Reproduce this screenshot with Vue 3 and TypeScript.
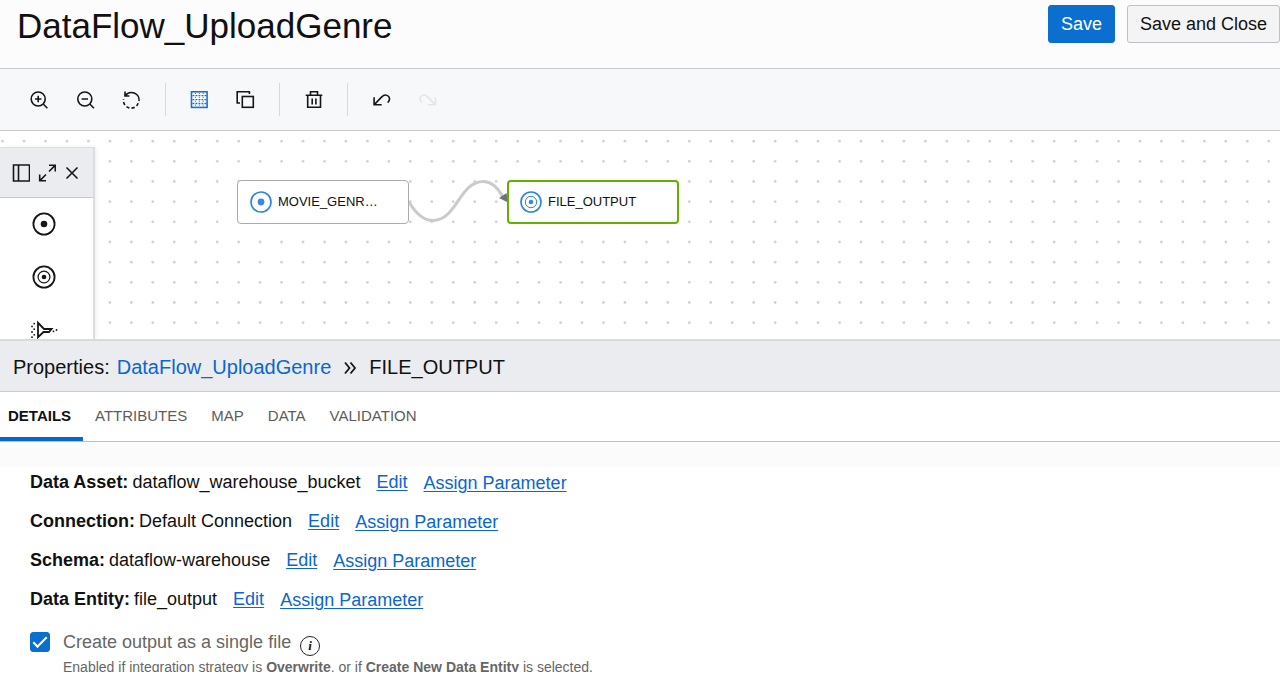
<script setup lang="ts">
import { ref } from 'vue'

interface DetailRow {
  label: string
  value: string
}

const flowName = 'DataFlow_UploadGenre'
const tabs: string[] = ['Details', 'Attributes', 'Map', 'Data', 'Validation']
const activeTab = ref('Details')
const singleFile = ref(true)

const rows: DetailRow[] = [
  { label: 'Data Asset:', value: 'dataflow_warehouse_bucket' },
  { label: 'Connection:', value: 'Default Connection' },
  { label: 'Schema:', value: 'dataflow-warehouse' },
  { label: 'Data Entity:', value: 'file_output' },
]

// Canvas grid: spacing of the dots and place of the first one
const grid = { dx: 21.46, dy: 20.16, x: 2.6, y: 10.2, cols: 120, rows: 10 }
const dots = Array.from({ length: grid.cols * grid.rows }, (_, i) => ({
  x: grid.x + (i % grid.cols) * grid.dx,
  y: grid.y + Math.floor(i / grid.cols) * grid.dy,
}))
</script>

<template>
  <div class="app">
    <header class="header">
      <h1>{{ flowName }}</h1>
      <div class="actions">
        <button class="btn primary" type="button">Save</button>
        <button class="btn" type="button">Save and Close</button>
      </div>
    </header>

    <div class="toolbar" role="toolbar" aria-label="Canvas tools">
      <button type="button" aria-label="Zoom in">
        <svg viewBox="0 0 24 24"><circle cx="11.2" cy="11" r="7" /><path d="M16.2 16l4.200 4.200M11.200 7.800v6.400M8 11h6.400" /></svg>
      </button>
      <button type="button" aria-label="Zoom out">
        <svg viewBox="0 0 24 24"><circle cx="11.8" cy="11" r="7" /><path d="M16.800 16l4.200 4.200M8.600 11h6.400" /></svg>
      </button>
      <button type="button" aria-label="Reset zoom">
        <svg viewBox="0 0 24 24">
          <path d="M6 3.600v4.400h4.400M6.200 7.800A7.600 7.600 0 0 1 20 13.200" />
          <path d="M19.200 15.200A7.600 7.600 0 0 1 4.600 11.200" stroke-dasharray="3.200 2.200" />
        </svg>
      </button>
      <span class="divider"></span>
      <button type="button" class="grid-on" aria-label="Toggle grid">
        <svg viewBox="0 0 24 24">
          <rect x="4.500" y="3.800" width="15.600" height="15.600" fill="#fff" />
          <path d="M5.500 7.700h14M5.500 11.600h14M5.500 15.500h14" stroke-dasharray="1.900 1.100" stroke-width="1.300" />
          <path d="M8.400 5v14M12.300 5v14M16.200 5v14" stroke-dasharray="1 2.900" stroke-width="1" />
        </svg>
      </button>
      <button type="button" aria-label="Duplicate">
        <svg viewBox="0 0 24 24"><path d="M7 15H4.200V3.700h12.200v2.400" /><rect x="9.300" y="8.500" width="11" height="10.800" /></svg>
      </button>
      <span class="divider"></span>
      <button type="button" aria-label="Delete">
        <svg viewBox="0 0 24 24"><path d="M4.700 7.200h16.600M9.500 7V3.700h7v3.300M6.700 7.500v11.800h12.800V7.500M11.200 10.500v6M14.900 10.500v6" /></svg>
      </button>
      <span class="divider"></span>
      <button type="button" aria-label="Undo">
        <svg viewBox="0 0 24 24"><path d="M5.100 9.300v7.500h7.600M5.300 16.600L12.500 9.100c5-5 11.200 1 6.200 5.500" /></svg>
      </button>
      <button type="button" disabled aria-label="Redo">
        <svg viewBox="0 0 24 24"><path d="M20.400 9.300v7.500h-7.600M20.200 16.600L13 9.100c-5-5-11.200 1-6.200 5.500" /></svg>
      </button>
    </div>

    <main class="canvas">
      <svg class="layer" aria-hidden="true">
        <circle v-for="(d, i) in dots" :key="i" :cx="d.x" :cy="d.y" r="1.4" fill="#d3d3d3" />
        <path d="M409 71C416 83 424 89.5 433 89.5C457 89.5 459 50.5 483.5 50.5C491 50.5 498 57 503 66" fill="none" stroke="#cbcbcb" stroke-width="3" />
        <path d="M499 67l7.500-5 1.500 9.500z" fill="#737373" />
      </svg>

      <div class="node source">
        <svg viewBox="0 0 22 22"><circle cx="11" cy="11" r="10" /><circle class="dot" cx="11" cy="11" r="3.4" /></svg>
        <span>MOVIE_GENR…</span>
      </div>
      <div class="node target">
        <svg viewBox="0 0 22 22">
          <circle cx="11" cy="11" r="10" /><circle class="thin" cx="11" cy="11" r="5.700" /><circle class="dot" cx="11" cy="11" r="2.300" />
        </svg>
        <span>FILE_OUTPUT</span>
      </div>

      <aside class="palette" aria-label="Operators">
        <div class="palette-head">
          <button type="button" aria-label="Dock panel">
            <svg viewBox="0 0 18 18"><path d="M1.500 1h16v16h-16zM6.500 1v16" /></svg>
          </button>
          <button type="button" aria-label="Expand panel">
            <svg viewBox="0 0 18 18"><path d="M11 1.200h6.300v6.300M17.100 1.400L11 7.500M8 16.800H1.700v-6.300M1.900 16.600l6.100-6.100" /></svg>
          </button>
          <button type="button" aria-label="Close panel">
            <svg viewBox="0 0 18 18"><path d="M2.500 3.500l11 11M13.500 3.500l-11 11" /></svg>
          </button>
        </div>
        <ul class="ops">
          <li>
            <svg viewBox="0 0 28 24"><circle cx="14" cy="12" r="10.600" /><circle class="fill" cx="14" cy="12" r="3.300" /></svg>
          </li>
          <li>
            <svg viewBox="0 0 28 24">
              <circle cx="14" cy="12" r="10.600" /><circle class="thin" cx="14" cy="12" r="5.900" /><circle class="fill" cx="14" cy="12" r="2.300" />
            </svg>
          </li>
          <li>
            <svg viewBox="0 0 28 24">
              <path d="M8 4.800v14.400L13.500 14h5.500l2.500-3H14z" />
              <g class="fill">
                <circle cx="4.200" cy="5.600" r=".9" /><circle cx="2" cy="8.400" r=".9" /><circle cx="4.200" cy="11.200" r=".9" />
                <circle cx="2" cy="14" r=".9" /><circle cx="4.200" cy="16.800" r=".9" /><circle cx="2" cy="19.200" r=".9" />
                <circle cx="23.500" cy="13.300" r=".9" /><circle cx="26.500" cy="12" r=".9" />
              </g>
            </svg>
          </li>
        </ul>
      </aside>
    </main>

    <section class="properties">
      <nav class="crumbs" aria-label="Properties">
        <span>Properties:</span>
        <a href="#flow">{{ flowName }}</a>
        <svg viewBox="0 0 14 14" aria-hidden="true"><path d="M2 1.500L6.500 7L2 12.500M7.500 1.500L12 7l-4.500 5.500" /></svg>
        <span>FILE_OUTPUT</span>
      </nav>

      <div class="tabs" role="tablist">
        <button
          v-for="tab in tabs"
          :key="tab"
          type="button"
          role="tab"
          :aria-selected="activeTab === tab"
          :class="{ active: activeTab === tab }"
          @click="activeTab = tab"
        >{{ tab }}</button>
      </div>

      <div class="details">
        <dl>
          <div v-for="row in rows" :key="row.label" class="row">
            <dt>{{ row.label }}</dt>
            <dd>{{ row.value }}</dd>
            <dd><a href="#edit">Edit</a></dd>
            <dd class="assign"><a href="#assign">Assign Parameter</a></dd>
          </div>
        </dl>
        <div class="check">
          <input id="single-file" v-model="singleFile" type="checkbox" />
          <label for="single-file">Create output as a single file</label>
          <button class="info" type="button" aria-label="More information">i</button>
        </div>
        <p class="help">
          Enabled if integration strategy is <b>Overwrite</b>, or if <b>Create New Data Entity</b> is selected.
        </p>
      </div>
    </section>
  </div>
</template>

<style>
body {
  margin: 0;
  background: #fff;
}
</style>

<style scoped>
.app {
  box-sizing: border-box;
  display: flex;
  flex-direction: column;
  height: 100vh;
  padding-bottom: 5px;
  overflow: hidden;
  color: #111;
  font-family: "Liberation Sans", Arial, sans-serif;
  font-size: 18px;
}

button {
  padding: 0;
  border: 0;
  background: none;
  color: inherit;
  font: inherit;
}

svg {
  fill: none;
  stroke: #161616;
  stroke-width: 1.6;
}

a {
  color: #0a66d2;
}

.header {
  display: flex;
  justify-content: space-between;
  flex: none;
  height: 68px;
  padding-left: 17px;
  border-bottom: 1px solid #c9c9cb;
  background: #fcfcfc;
}

h1 {
  margin: 0;
  font-size: 35px;
  font-weight: 400;
  line-height: 52px;
}

.actions {
  display: flex;
  align-items: flex-start;
  gap: 12px;
  padding-top: 5px;
}

.btn {
  height: 38px;
  padding: 0 12px;
  border: 1px solid #bcc1c8;
  border-radius: 3px;
  background: #f4f4f4;
}

.btn.primary {
  border-color: #0b6fd0;
  background: #0b6fd0;
  color: #fff;
}

.toolbar {
  display: flex;
  align-items: center;
  gap: 22px;
  flex: none;
  height: 61px;
  padding: 0 27px;
  border-bottom: 1px solid #c9c9cb;
  background: #f7f8fa;
}

.toolbar button,
.toolbar svg {
  display: block;
  width: 24px;
  height: 24px;
}

.toolbar .grid-on svg {
  stroke: #1470d6;
}

.toolbar button:disabled svg {
  stroke: #e4e5e7;
}

.divider {
  width: 1px;
  height: 33px;
  margin: 0 -1px 0 0;
  background: #d3d9e0;
}

.canvas {
  position: relative;
  flex: none;
  height: 208px;
  overflow: hidden;
  background: #fff;
}

.layer {
  position: absolute;
  inset: 0;
  width: 100%;
  height: 100%;
  stroke: none;
}

.node {
  position: absolute;
  top: 49px;
  box-sizing: border-box;
  display: flex;
  align-items: center;
  gap: 6px;
  width: 172px;
  height: 44px;
  padding: 0 12px 1px;
  border: 1px solid #ababab;
  border-radius: 4px;
  background: #fff;
  font-size: 13px;
}

.node svg {
  width: 22px;
  height: 22px;
  stroke: #2b83e2;
}

.node .thin {
  stroke-width: 1;
}

.node .dot {
  fill: #3a86e0;
  stroke: none;
}

.source {
  left: 237px;
}

.target {
  left: 507px;
  padding: 0 11px 1px;
  border: 2px solid #62b100;
}

.palette {
  position: absolute;
  top: 16px;
  bottom: 0;
  left: 0;
  width: 93px;
  border-top: 1px solid #dcdddf;
  border-right: 2px solid #dcdddf;
  background: #fff;
  box-shadow: 2px 0 4px rgba(0, 0, 0, 0.06);
}

.palette-head {
  display: flex;
  align-items: center;
  gap: 8px;
  height: 49px;
  padding-left: 12px;
  border-bottom: 1px solid #c9cacd;
  background: #ebecf0;
}

.palette-head button,
.palette-head svg {
  display: block;
  width: 18px;
  height: 18px;
}

.ops {
  display: grid;
  gap: 29px;
  margin: 0;
  padding: 14px 0 0 30px;
  list-style: none;
}

.ops svg {
  display: block;
  width: 28px;
  height: 24px;
  stroke-width: 1.8;
}

.ops .thin {
  stroke-width: 1.2;
}

.ops .fill {
  fill: #161616;
  stroke: none;
}

.properties {
  display: flex;
  flex: 1;
  flex-direction: column;
  min-height: 0;
  border-top: 2px solid #dadada;
}

.crumbs {
  display: flex;
  align-items: center;
  box-sizing: border-box;
  flex: none;
  height: 51px;
  padding: 2px 13px 0;
  border-bottom: 1px solid #c9cbce;
  background: #ebecf0;
  font-size: 20px;
}

.crumbs a {
  margin-left: 7px;
  text-decoration: none;
}

.crumbs svg {
  width: 14px;
  height: 14px;
  margin: 2px 12px 0;
  stroke-width: 1.8;
}

.tabs {
  display: flex;
  flex: none;
  height: 49px;
  border-bottom: 1px solid #b9bfc6;
}

.tabs button {
  padding: 1px 12px 0;
  border-bottom: 4px solid transparent;
  color: #5c5c5c;
  font-size: 15px;
  text-transform: uppercase;
}

.tabs button:first-child {
  padding-left: 8px;
}

.tabs .active {
  border-bottom-color: #0a65cf;
  color: #111;
  font-weight: 700;
}

.details {
  flex: 1;
  min-height: 0;
  padding: 21px 30px 0;
  overflow: hidden;
  background: linear-gradient(#fbfbfb 25px, #fff 25px);
}

dl,
dd,
.help {
  margin: 0;
}

.row {
  display: flex;
  line-height: 39px;
}

dt {
  margin-right: 4px;
  font-weight: 700;
}

dd + dd {
  margin-left: 16px;
}

.assign {
  height: 38px;
  padding-top: 1px;
}

dd a {
  text-underline-offset: 2px;
}

.check {
  display: flex;
  align-items: flex-start;
  height: 26px;
  margin-top: 11px;
  color: #666;
  line-height: 24px;
}

.check input {
  appearance: none;
  display: grid;
  place-items: center;
  width: 20px;
  height: 20px;
  margin: 2px 13px 0 0;
  border: 1px solid #0b6fd0;
  border-radius: 3px;
}

.check input:checked {
  background: #0b6fd0;
}

.check input:checked::after {
  width: 12px;
  height: 5px;
  margin-bottom: 4px;
  border-bottom: 2px solid #fff;
  border-left: 2px solid #fff;
  content: "";
  rotate: -45deg;
}

.info {
  align-self: flex-end;
  width: 20px;
  height: 20px;
  margin-left: 9px;
  border: 1px solid #222;
  border-radius: 50%;
  color: #111;
  font: italic 700 13px/16px "Liberation Serif", serif;
}

.help {
  margin-top: 1px;
  padding-left: 33px;
  color: #666;
  font-size: 14px;
  line-height: 20px;
}
</style>
